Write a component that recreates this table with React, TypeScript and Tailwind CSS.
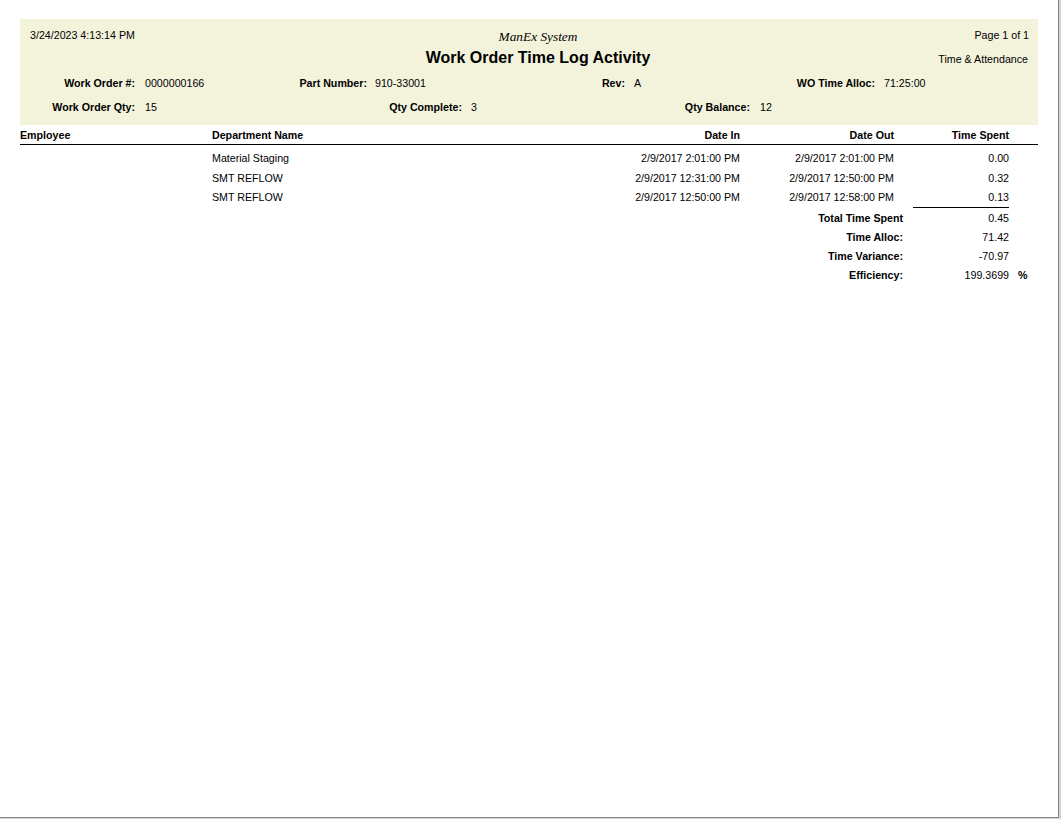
import React from "react";

const font = { fontFamily: '"Liberation Sans", Arial, sans-serif' };

function Field({ label, value, lw, vw, gap }: { label: string; value: string; lw: string; vw: string; gap: string }) {
  return (
    <>
      <div className={`${lw} text-right font-bold`}>{label}</div>
      <div className={`${gap} ${vw}`}>{value}</div>
    </>
  );
}

const rows = [
  { dept: "Material Staging", din: "2/9/2017 2:01:00 PM", dout: "2/9/2017 2:01:00 PM", t: "0.00", h: "h-[20px]" },
  { dept: "SMT REFLOW", din: "2/9/2017 12:31:00 PM", dout: "2/9/2017 12:50:00 PM", t: "0.32", h: "h-[19px]" },
  { dept: "SMT REFLOW", din: "2/9/2017 12:50:00 PM", dout: "2/9/2017 12:58:00 PM", t: "0.13", h: "h-[20px]" },
];

const totals = [
  { l: "Total Time Spent", v: "0.45", p: "" },
  { l: "Time Alloc:", v: "71.42", p: "" },
  { l: "Time Variance:", v: "-70.97", p: "" },
  { l: "Efficiency:", v: "199.3699", p: "%" },
];

export default function App() {
  return (
    <div className="w-[1061px] h-[819px] bg-[#d4d4d4]" style={font}>
      <div className="w-[1059px] h-[818px] bg-white border-r border-b border-[#828282] pl-[20px] pt-[19px] text-[10.67px] text-black">
        {/* Header band */}
        <div className="w-[1018px] h-[106px] bg-[#f3f3dc] flex flex-col">
          <div className="flex h-[52px]">
            <div className="w-[318px] pl-[10px] pt-[9px] leading-[14px]">3/24/2023 4:13:14 PM</div>
            <div className="w-[400px] text-center pt-[10px]">
              <div className="leading-[16px] italic text-[13.33px]" style={{ fontFamily: '"Liberation Serif", "Times New Roman", serif' }}>
                ManEx System
              </div>
              <div className="mt-[3px] leading-[20px] text-[16px] font-bold">Work Order Time Log Activity</div>
            </div>
            <div className="flex-1 text-right pr-[9px] pt-[9px]">
              <div className="leading-[14px]">Page 1 of 1</div>
              <div className="mt-[10px] leading-[14px] mr-[1px]">Time &amp; Attendance</div>
            </div>
          </div>
          <div className="flex h-[24px] items-center leading-[14px]">
            <Field label="Work Order #:" value="0000000166" lw="w-[115px]" vw="w-[150px]" gap="ml-[10px]" />
            <Field label="Part Number:" value="910-33001" lw="w-[72px]" vw="w-[150px]" gap="ml-[8px]" />
            <Field label="Rev:" value="A" lw="w-[100px]" vw="w-[150px]" gap="ml-[9px]" />
            <Field label="WO Time Alloc:" value="71:25:00" lw="w-[91px]" vw="w-[100px]" gap="ml-[9px]" />
          </div>
          <div className="flex h-[24px] items-center leading-[14px]">
            <Field label="Work Order Qty:" value="15" lw="w-[115px]" vw="w-[150px]" gap="ml-[10px]" />
            <Field label="Qty Complete:" value="3" lw="w-[167px]" vw="w-[150px]" gap="ml-[9px]" />
            <Field label="Qty Balance:" value="12" lw="w-[129px]" vw="w-[100px]" gap="ml-[10px]" />
          </div>
        </div>

        {/* Table header */}
        <div className="w-[1018px] flex h-[20px] items-center border-b border-black font-bold pt-[1px]">
          <div className="w-[192px]">Employee</div>
          <div className="w-[400px]">Department Name</div>
          <div className="w-[128px] text-right">Date In</div>
          <div className="w-[154px] text-right">Date Out</div>
          <div className="w-[115px] text-right">Time Spent</div>
        </div>

        {/* Data rows */}
        <div className="w-[1018px] pt-[3px]">
          {rows.map((r, i) => (
            <div key={i} className={`flex items-center ${r.h}`}>
              <div className="w-[192px]"></div>
              <div className="w-[400px]">{r.dept}</div>
              <div className="w-[128px] text-right">{r.din}</div>
              <div className="w-[154px] text-right">{r.dout}</div>
              <div className="w-[115px] text-right">{r.t}</div>
            </div>
          ))}
        </div>
        <div className="ml-[893px] w-[96px] h-px bg-black"></div>

        {/* Totals */}
        <div className="w-[1018px]">
          {totals.map((t, i) => (
            <div key={i} className="flex items-center h-[19px]">
              <div className="w-[883px] text-right font-bold">{t.l}</div>
              <div className="w-[106px] text-right">{t.v}</div>
              <div className="pl-[9px] font-bold">{t.p}</div>
            </div>
          ))}
        </div>
      </div>
    </div>
  );
}
